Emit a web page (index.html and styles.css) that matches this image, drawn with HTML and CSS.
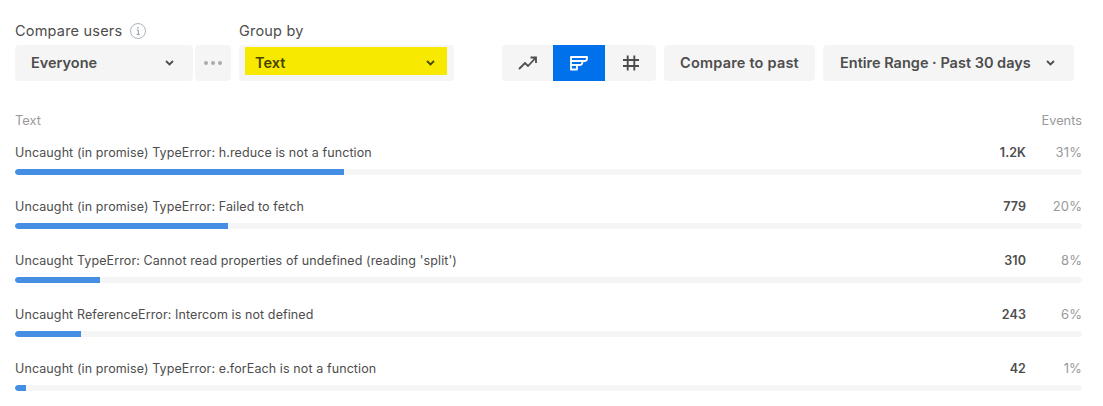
FILE: index.html
```html
<!DOCTYPE html>
<html lang="en">
<head>
<meta charset="utf-8">
<title>Insights</title>
<link rel="stylesheet" href="styles.css">
</head>
<body>
<div class="page">
  <div class="controls">
    <div class="group">
      <div class="label">Compare users
        <svg class="info" width="16" height="16" viewBox="0 0 16 16" fill="none"><circle cx="8" cy="8" r="7.5" stroke="#a9b4c2" stroke-width="1"/><path d="M6.8 7h1.500v4.200M6.600 11.400h3.200" stroke="#8e99a8" stroke-width="1"/><circle cx="8" cy="4.700" r=".8" fill="#8e99a8"/></svg>
      </div>
      <div class="row">
        <div class="btn select everyone"><span>Everyone</span>
          <svg class="chev" width="9" height="6" viewBox="0 0 9 6" fill="none"><path d="M1 1l3.500 3.500L8 1" stroke="#4d4d4d" stroke-width="1.800"/></svg>
        </div>
        <div class="btn dots"><i></i><i></i><i></i></div>
      </div>
    </div>
    <div class="group">
      <div class="label">Group by</div>
      <div class="btn groupby">
        <div class="highlight"><span>Text</span>
          <svg class="chev" width="9" height="6" viewBox="0 0 9 6" fill="none"><path d="M1 1l3.500 3.500L8 1" stroke="#4a4700" stroke-width="1.800"/></svg>
        </div>
      </div>
    </div>
    <div class="tools">
      <div class="toggle">
        <div class="tg"><svg width="20" height="14" viewBox="0 0 20 14" fill="none"><path d="M1 13l6-6 3 3 7.500-8M12.500 1.500h5.500V7" stroke="#4d4d4d" stroke-width="1.800"/></svg></div>
        <div class="tg on"><svg width="18" height="15" viewBox="0 0 18 15" fill="none" stroke="#fff" stroke-width="1.800" stroke-linejoin="round"><path d="M1 1h16v1.500q0 2.500-2.500 2.500H1zM1 5h11.500q0 4-2.500 4H1zM1 9h6v4.500H1z"/></svg></div>
        <div class="tg"><svg width="16" height="16" viewBox="0 0 16 16" fill="none" stroke="#4d4d4d" stroke-width="1.900"><path d="M4.700 .5v15M11.300 .5v15M0 5h16M0 11h16"/></svg></div>
      </div>
      <div class="btn plain compare">Compare to past</div>
      <div class="btn plain range"><span>Entire Range · Past 30 days</span>
        <svg class="chev" width="9" height="6" viewBox="0 0 9 6" fill="none"><path d="M1 1l3.500 3.500L8 1" stroke="#4d4d4d" stroke-width="1.800"/></svg>
      </div>
    </div>
  </div>
  <div class="thead"><span>Text</span><span>Events</span></div>
  <div class="list">
    <div class="item"><div class="line"><span class="name">Uncaught (in promise) TypeError: h.reduce is not a function</span><b class="count">1.2K</b><span class="pct">31%</span></div><div class="track"><div class="fill" style="width:329px"></div></div></div>
    <div class="item"><div class="line"><span class="name">Uncaught (in promise) TypeError: Failed to fetch</span><b class="count">779</b><span class="pct">20%</span></div><div class="track"><div class="fill" style="width:213px"></div></div></div>
    <div class="item"><div class="line"><span class="name">Uncaught TypeError: Cannot read properties of undefined (reading 'split')</span><b class="count">310</b><span class="pct">8%</span></div><div class="track"><div class="fill" style="width:85px"></div></div></div>
    <div class="item"><div class="line"><span class="name">Uncaught ReferenceError: Intercom is not defined</span><b class="count">243</b><span class="pct">6%</span></div><div class="track"><div class="fill" style="width:66px"></div></div></div>
    <div class="item"><div class="line"><span class="name">Uncaught (in promise) TypeError: e.forEach is not a function</span><b class="count">42</b><span class="pct">1%</span></div><div class="track"><div class="fill" style="width:11px"></div></div></div>
  </div>
</div>
</body>
</html>
```
FILE: styles.css
```css
* { box-sizing: border-box; }
html, body { margin: 0; background: #fff; }
body { font-family: "Inter", "Liberation Sans", sans-serif; color: #4d4d4d; }
.page { width: 1103px; height: 406px; padding: 21px 21px 0 15px; overflow: hidden; }
.controls { display: flex; align-items: flex-end; gap: 8px; }
.group { display: flex; flex-direction: column; }
.label { height: 24px; font-size: 14.5px; letter-spacing: .2px; line-height: 20px; display: flex; align-items: flex-start; gap: 8px; color: #4d4d4d; }
.info { margin-top: 2px; }
.row { display: flex; gap: 2px; }
.btn { height: 36px; background: #f5f5f5; border-radius: 4px; display: flex; align-items: center; font-size: 14.5px; font-weight: 600; line-height: 20px; }
.everyone { width: 178px; padding: 0 19px 0 16px; justify-content: space-between; }
.dots { width: 36px; justify-content: center; gap: 3px; }
.dots i { width: 4px; height: 4px; border-radius: 50%; background: #aaa; }
.groupby { width: 215px; padding: 2px 7px 6px 6px; align-items: stretch; }
.highlight { flex: 1; background: #f7e900; color: #474400; display: flex; align-items: center; justify-content: space-between; padding: 4px 12px 0 10px; }
.tools { display: flex; gap: 8px; margin-left: 40px; }
.toggle { display: flex; width: 154px; height: 36px; background: #f5f5f5; border-radius: 4px; overflow: hidden; }
.tg { flex: 1; display: flex; align-items: center; justify-content: center; }
.tg:first-child { flex: 0 0 51px; }
.tg.on { flex: 0 0 52px; background: #0070eb; }
.plain { padding: 0 16px; width: 151px; justify-content: center; }
.compare { letter-spacing: .2px; }
.range { width: 251px; padding: 0 19px 0 17px; justify-content: space-between; }
.thead { display: flex; justify-content: space-between; margin-top: 32px; font-size: 12.8px; line-height: 16px; color: #999; }
.list { margin-top: 13px; }
.item { height: 54px; }
.line { display: flex; align-items: center; height: 20px; font-size: 12.5px; letter-spacing: .1px; }
.name { flex: 1; }
.count { font-size: 12.5px; font-weight: 600; width: 50px; text-align: right; color: #4d4d4d; }
.pct { font-size: 13px; width: 56px; text-align: right; color: #999; }
.track { margin-top: 7px; height: 6px; background: #f5f5f5; border-radius: 3px; overflow: hidden; }
.fill { height: 100%; background: #448fe4; border-radius: 3px 0 0 3px; }
```
